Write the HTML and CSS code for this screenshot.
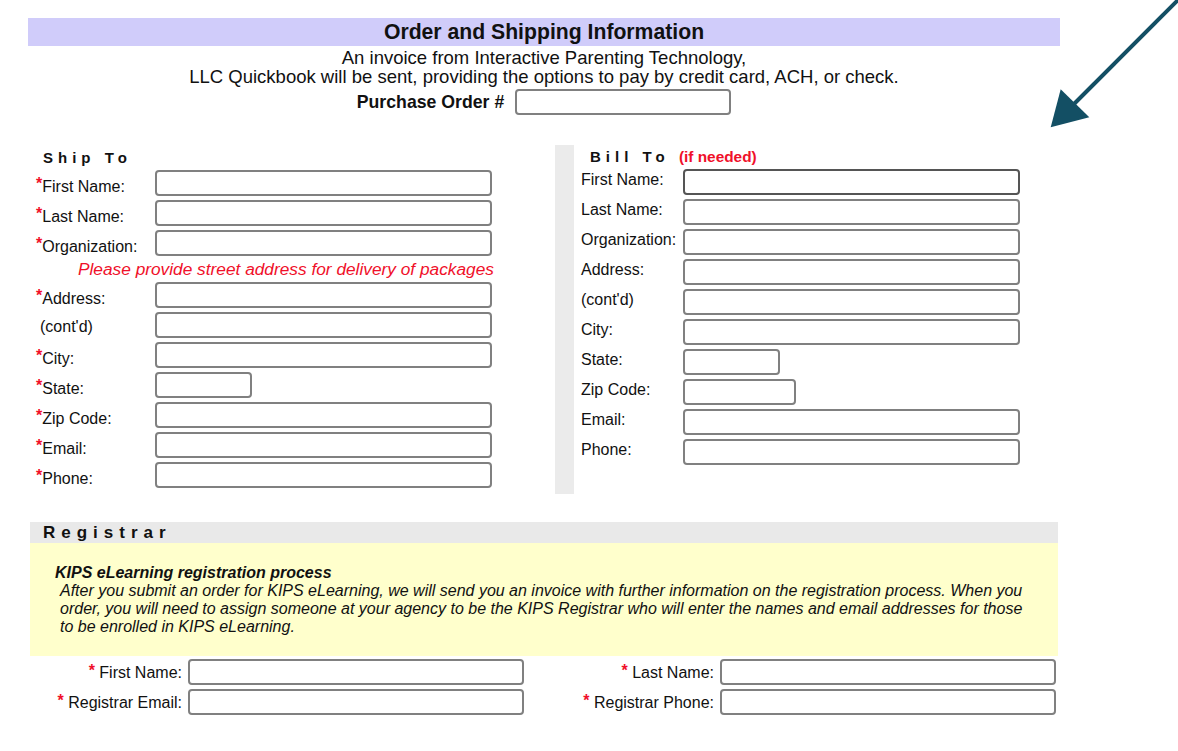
FILE: index.html
```html
<!DOCTYPE html>
<html lang="en">

<head>
    <meta charset="UTF-8">
    <meta name="viewport" content="width=device-width, initial-scale=1.0">
    <title>Order and Shipping Information</title>
    <link rel="stylesheet" href="styles.css">
</head>

<body>
    <div class="page">
        <!-- order header -->
        <h2 class="section-title">Order and Shipping Information</h2>
        <p class="invoice-note">An invoice from Interactive Parenting Technology,<br>LLC Quickbook will be sent, providing the options to pay by credit card, ACH, or check.</p>
        <div class="po-row">
            <label for="po" class="po-label">Purchase Order #</label>
            <input type="text" id="po" class="text-input po-input">
        </div>

        <!-- addresses -->
        <div class="address-cols">
            <div class="ship-to">
                <div class="col-heading">Ship&nbsp;To</div>
                <div class="field"><label><span class="req">*</span>First Name:</label><input type="text" class="text-input"></div>
                <div class="field"><label><span class="req">*</span>Last Name:</label><input type="text" class="text-input"></div>
                <div class="field"><label><span class="req">*</span>Organization:</label><input type="text" class="text-input"></div>
                <div class="street-note">Please provide street address for delivery of packages</div>
                <div class="field"><label><span class="req">*</span>Address:</label><input type="text" class="text-input"></div>
                <div class="field"><label class="cont">(cont'd)</label><input type="text" class="text-input"></div>
                <div class="field"><label><span class="req">*</span>City:</label><input type="text" class="text-input"></div>
                <div class="field"><label><span class="req">*</span>State:</label><input type="text" class="text-input state-input"></div>
                <div class="field"><label><span class="req">*</span>Zip Code:</label><input type="text" class="text-input"></div>
                <div class="field"><label><span class="req">*</span>Email:</label><input type="text" class="text-input"></div>
                <div class="field"><label><span class="req">*</span>Phone:</label><input type="text" class="text-input"></div>
            </div>

            <div class="bill-to">
                <div class="col-heading">Bill&nbsp;To <span class="if-needed">(if needed)</span></div>
                <div class="field"><label>First Name:</label><input type="text" class="text-input focused"></div>
                <div class="field"><label>Last Name:</label><input type="text" class="text-input"></div>
                <div class="field"><label>Organization:</label><input type="text" class="text-input"></div>
                <div class="field"><label>Address:</label><input type="text" class="text-input"></div>
                <div class="field"><label>(cont'd)</label><input type="text" class="text-input"></div>
                <div class="field"><label>City:</label><input type="text" class="text-input"></div>
                <div class="field"><label>State:</label><input type="text" class="text-input state-input"></div>
                <div class="field"><label>Zip Code:</label><input type="text" class="text-input zip-input"></div>
                <div class="field"><label>Email:</label><input type="text" class="text-input"></div>
                <div class="field"><label>Phone:</label><input type="text" class="text-input"></div>
            </div>
        </div>

        <!-- registrar -->
        <div class="bar-heading">Registrar</div>
        <div class="registrar-info">
            <div class="info-title">KIPS eLearning registration process</div>
            <p>After you submit an order for KIPS eLearning, we will send you an invoice with further information on the registration process. When you order, you will need to assign someone at your agency to be the KIPS Registrar who will enter the names and email addresses for those to be enrolled in KIPS eLearning.</p>
        </div>
        <div class="registrar-fields">
            <label><span class="req">*</span> First Name:</label>
            <input type="text" class="text-input">
            <label><span class="req">*</span> Last Name:</label>
            <input type="text" class="text-input">
            <label><span class="req">*</span> Registrar Email:</label>
            <input type="text" class="text-input">
            <label><span class="req">*</span> Registrar Phone:</label>
            <input type="text" class="text-input">
        </div>
    </div>

    <!-- pointer arrow -->
    <svg class="arrow" width="148" height="140" viewBox="0 0 148 140">
        <line x1="150" y1="-2" x2="44" y2="104" stroke="#134f64" stroke-width="4" />
        <polygon points="20.7,127.3 30.7,89.3 59.3,117.3" fill="#134f64" />
    </svg>
</body>

</html>
```

FILE: styles.css
```css
/* general */
body {
    margin: 0;
    font-family: "Liberation Sans", Arial, sans-serif;
    color: #111;
    background-color: #fff;
}

.page {
    width: 1032px;
    margin-left: 28px;
    padding-top: 18px;
}

.text-input {
    box-sizing: border-box;
    width: 337px;
    height: 26px;
    margin: 0;
    padding: 2px 4px;
    border: 2px solid #808080;
    border-radius: 4px;
    background-color: #fff;
    font: inherit;
}

.text-input.focused {
    border-color: #555;
}

.req {
    color: #f0102a;
    font-weight: bold;
    vertical-align: 3px;
}

/* order header */
.section-title {
    margin: 0;
    height: 28px;
    line-height: 28px;
    background-color: #d0ccfa;
    text-align: center;
    font-size: 21.2px;
    font-weight: bold;
}

.invoice-note {
    margin: 2px 0 0;
    text-align: center;
    font-size: 18.5px;
    line-height: 19px;
}

.po-row {
    display: flex;
    justify-content: center;
    align-items: center;
    gap: 11px;
    margin-top: 3px;
}

.po-label {
    font-size: 17.7px;
    font-weight: bold;
}

.po-input {
    width: 216px;
}

/* ship to / bill to */
.address-cols {
    display: flex;
    margin-top: 30px;
}

.ship-to {
    width: 519px;
    padding: 2px 0 0 8px;
}

.bill-to {
    flex: 1;
    padding: 1px 0 25px 7px;
    border-left: 19px solid #ebebeb;
}

.col-heading {
    height: 22px;
    line-height: 22px;
    font-size: 15px;
    font-weight: bold;
    letter-spacing: 5px;
}

.ship-to .col-heading {
    padding-left: 7px;
    margin-bottom: 1px;
}

.bill-to .col-heading {
    padding-left: 9px;
    margin-bottom: 1px;
}

.if-needed {
    color: #f0102a;
    letter-spacing: 0;
    font-size: 15.4px;
}

.field {
    display: flex;
    align-items: center;
    height: 26px;
    margin-bottom: 4px;
    font-size: 16px;
}

.ship-to .field label {
    width: 119px;
    padding-top: 4px;
}

.ship-to .field label.cont {
    width: 115px;
    padding-left: 4px;
}

.bill-to .field label {
    width: 102px;
    padding-bottom: 4px;
}

.state-input {
    width: 97px;
}

.zip-input {
    width: 113px;
}

.street-note {
    padding-left: 42px;
    margin-bottom: 4px;
    line-height: 18px;
    font-size: 17.3px;
    font-style: italic;
    color: #f0102a;
}

/* registrar */
.bar-heading {
    margin: 28px 2px 0;
    height: 21px;
    line-height: 21px;
    padding-left: 13px;
    background-color: #e9e9e9;
    font-size: 17px;
    font-weight: bold;
    letter-spacing: 6px;
}

.registrar-info {
    margin: 0 2px;
    padding: 21px 28px 20px 25px;
    background-color: #ffffcc;
    font-size: 16px;
    line-height: 18px;
    font-style: italic;
}

.info-title {
    font-weight: bold;
}

.registrar-info p {
    margin: 0 0 0 5px;
}

.registrar-fields {
    display: grid;
    grid-template-columns: 152px 336px 184px 336px;
    grid-auto-rows: 26px;
    column-gap: 6px;
    row-gap: 4px;
    align-items: center;
    margin: 3px 2px 0;
    font-size: 16px;
}

.registrar-fields label {
    text-align: right;
}

.registrar-fields .text-input {
    width: 336px;
}

.registrar-fields .req {
    vertical-align: 2px;
}

/* pointer arrow */
.arrow {
    position: absolute;
    top: 0;
    left: 1030px;
}
```
